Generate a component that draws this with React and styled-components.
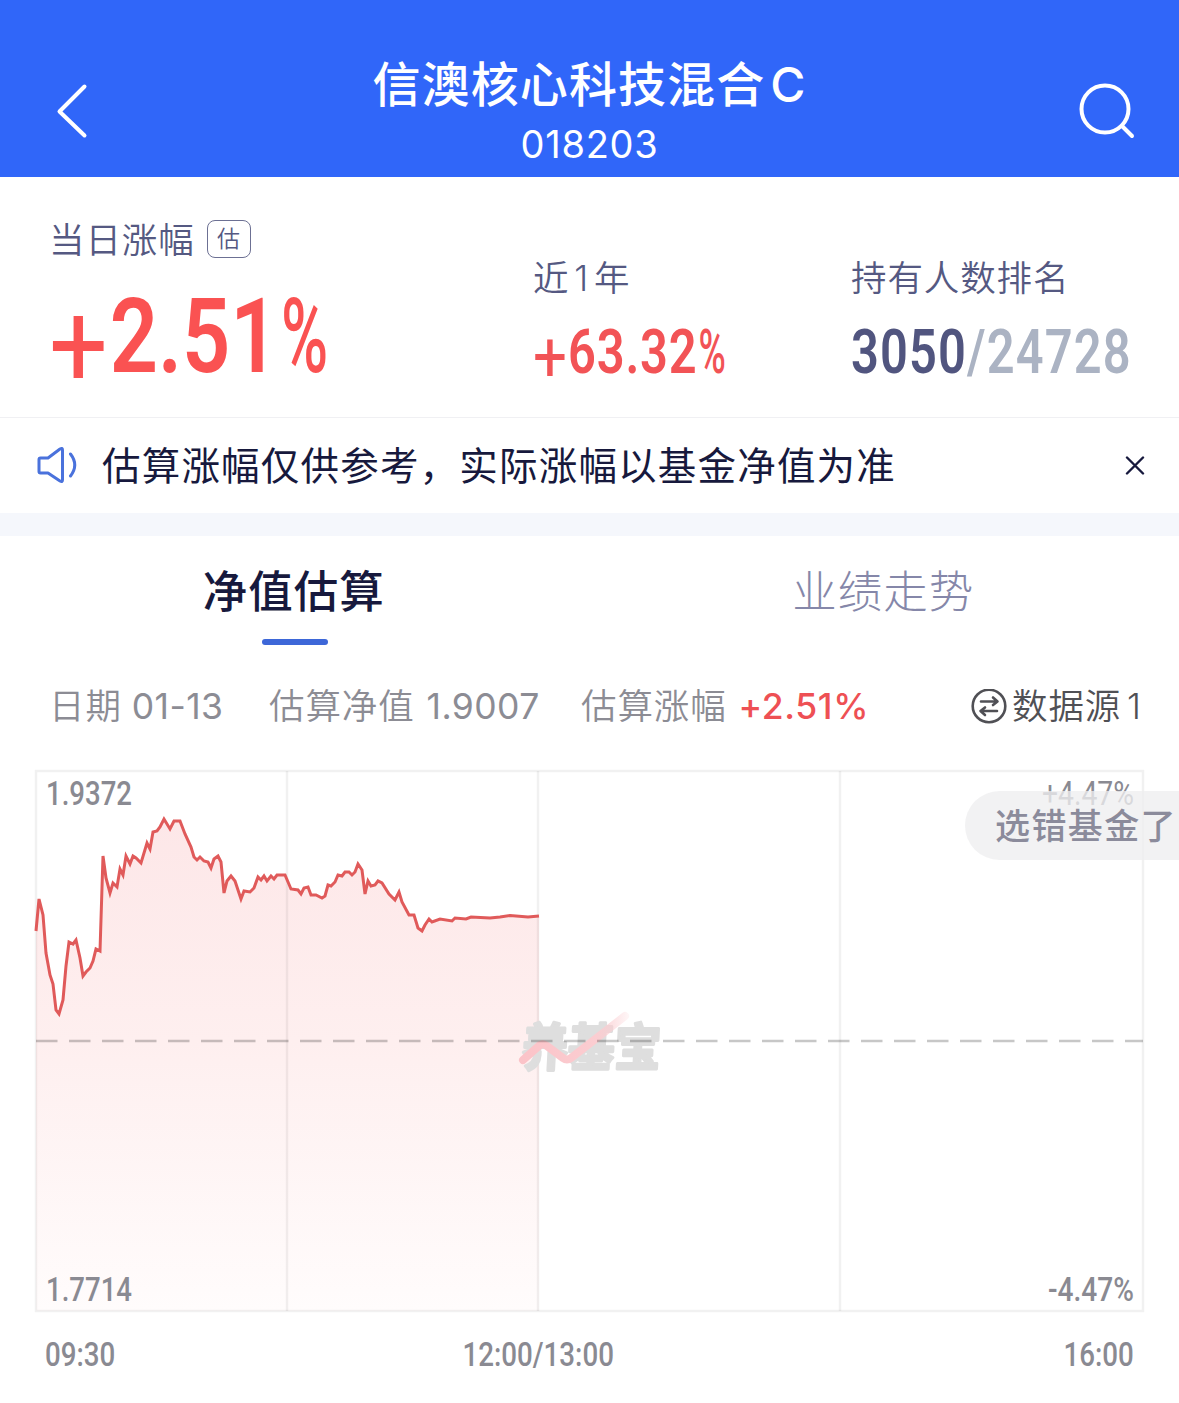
import React from "react";
import styled, { createGlobalStyle } from "styled-components";

const GlobalStyle = createGlobalStyle`
    * {
        box-sizing: border-box;
    }

    body {
        margin: 0;
        background: #fff;
        font-family: Inter, "Noto Sans CJK SC", sans-serif;
        -webkit-font-smoothing: antialiased;
    }
`;

const Page = styled.div`
    width: 1179px;
    height: 1403px;
    overflow: hidden;
    background: #fff;
`;

const Header = styled.header`
    display: flex;
    align-items: flex-start;
    justify-content: space-between;
    height: 177px;
    padding: 0 42px 0 54px;
    color: #fff;
    background: #3066f9;
`;

const HeaderIcon = styled.svg`
    width: 60px;
    height: 60px;
    margin-top: 81px;
    fill: none;
    stroke: #fff;
    stroke-width: 4;
    stroke-linecap: round;
    stroke-linejoin: round;
`;

const Titles = styled.div`
    padding: 54px 12px 0 0;
    text-align: center;
`;

const Title = styled.h1`
    margin: 0;
    font-size: 48px;
    font-weight: 500;
    line-height: 62px;
    letter-spacing: 1.1px;
    word-spacing: -9px;
`;

const Code = styled.div`
    font-size: 38px;
    line-height: 56px;
    letter-spacing: 0.7px;
`;

const Stats = styled.section`
    display: flex;
    height: 241px;
    padding-left: 49px;
    border-bottom: 1px solid #f0f0f3;
`;

const Stat = styled.div`
    flex: none;
    width: ${(props) => props.$width}px;
    padding-top: ${(props) => props.$top}px;
`;

const StatLabel = styled.div`
    height: 48px;
    display: flex;
    align-items: center;
    color: #555982;
    font-size: 35.5px;
    font-weight: 350;
    letter-spacing: 0.9px;
    word-spacing: -6px;
    white-space: nowrap;
`;

const Tag = styled.span`
    display: flex;
    align-items: center;
    justify-content: center;
    width: 44px;
    height: 38px;
    margin: 3px 0 0 12px;
    border: 1.5px solid #6c7093;
    border-radius: 8px;
    font-size: 23px;
    line-height: 30px;
    letter-spacing: 0;
`;

// Narrow figures: Roboto squeezed horizontally
const Num = styled.span`
    display: inline-block;
    color: ${(props) => props.$color};
    font-family: Roboto, sans-serif;
    font-size: ${(props) => props.$size}px;
    font-weight: ${(props) => props.$weight || 600};
    line-height: 1;
    letter-spacing: ${(props) => props.$spacing || 0}px;
    white-space: nowrap;
    transform: scaleX(${(props) => props.$scale || 0.8});
    transform-origin: ${(props) => props.$origin || "left"} center;
`;

const Plus = styled.span`
    display: inline-block;
    width: 0.62em;
    font-size: 1.16em;
    font-weight: 400;
    line-height: 0;
    transform: translateY(0.12em) scaleX(1.06);
    transform-origin: left center;
`;

const Percent = styled.span`
    display: inline-block;
    width: 0.6em;
    margin-left: 0.03em;
    font-weight: 500;
    transform: scaleX(0.76);
    transform-origin: left center;
`;

const StatValue = styled.div`
    margin-top: ${(props) => props.$gap}px;
    line-height: 0;
`;

const Muted = styled.span`
    color: #abb3c3;
`;

const Notice = styled.section`
    display: flex;
    align-items: center;
    height: 95px;
    padding: 0 34px 0 36px;
    color: #17193d;
    font-size: 38.5px;
    letter-spacing: 1.2px;
`;

const NoticeText = styled.span`
    flex: 1;
    margin-left: 24px;
    line-height: 60px;
`;

const Divider = styled.div`
    height: 23px;
    background: #f5f7fc;
`;

const Tabs = styled.nav`
    display: flex;
    height: 110px;
`;

const Tab = styled.div`
    flex: 1;
    display: flex;
    flex-direction: column;
    align-items: center;
    padding-top: 25px;
    color: ${(props) => (props.$active ? "#17193d" : "#8587a9")};
    font-size: 44.5px;
    font-weight: ${(props) => (props.$active ? 500 : 300)};
    line-height: 62px;

    &::after {
        content: "";
        width: 66px;
        height: 6px;
        margin-top: 16px;
        border-radius: 3px;
        background: ${(props) => (props.$active ? "#3d67d8" : "transparent")};
    }
`;

const TabText = styled.span`
    padding-right: 2px;
    letter-spacing: 1px;
`;

const Info = styled.div`
    display: flex;
    align-items: center;
    height: 120px;
    padding: 2px 37px 0 49px;
    color: #8c8c94;
    font-size: 35.5px;
    font-weight: 350;
    line-height: 60px;
    letter-spacing: 0.9px;
    white-space: nowrap;
`;

const InfoItem = styled.span`
    display: flex;
    gap: ${(props) => props.$gap || 12}px;
    width: ${(props) => props.$width}px;
`;

const Figure = styled.span`
    color: ${(props) => (props.$up ? "#ee5054" : "inherit")};
    font-weight: ${(props) => (props.$up ? 500 : 400)};
    letter-spacing: ${(props) => props.$spacing || 0.4}px;
`;

const Source = styled.span`
    display: flex;
    align-items: center;
    gap: 5px;
    margin-left: auto;
    color: #505055;
    word-spacing: -5px;
`;

const ChartBox = styled.div`
    position: relative;
    height: 558px;
`;

const FloatingPill = styled.div`
    position: absolute;
    top: 25px;
    right: 0;
    width: 214px;
    height: 69px;
    padding-left: 30px;
    overflow: hidden;
    border-radius: 35px 0 0 35px;
    background: rgba(238, 238, 240, 0.78);
    color: #8b8b9b;
    font-size: 35px;
    font-weight: 500;
    line-height: 70px;
    letter-spacing: 1.4px;
    white-space: nowrap;
`;

const Axis = styled.div`
    display: grid;
    grid-template-columns: 1fr 1fr 1fr;
    padding: 14px 45px 0;
    line-height: 0;
`;

const AxisCell = styled.div`
    text-align: ${(props) => props.$align};
    ${(props) => props.$align === "center" && "margin-left: -103px;"}
`;

const points = [
    [36, 931], [39, 899], [43, 915], [46, 953], [50, 975], [53, 984], [56, 1010], [59, 1014],
    [63, 1000], [66, 966], [69, 942], [73, 944], [76, 940], [80, 958], [83, 976], [86, 972],
    [90, 968], [93, 961], [96, 949], [100, 951], [103, 856], [106, 878], [110, 893], [113, 883],
    [117, 887], [120, 869], [123, 875], [126, 856], [130, 864], [133, 856], [136, 858], [141, 863],
    [147, 843], [150, 849], [153, 832], [157, 831], [160, 827], [164, 819], [170, 829], [174, 821],
    [180, 821], [185, 834], [191, 847], [194, 857], [197, 860], [200, 857], [204, 861], [208, 862],
    [211, 868], [214, 859], [218, 856], [221, 862], [224, 893], [227, 881], [231, 876], [235, 881],
    [241, 899], [244, 891], [250, 892], [254, 888], [258, 877], [261, 880], [264, 876], [267, 881],
    [271, 876], [274, 879], [277, 875], [285, 875], [291, 889], [298, 890], [301, 894], [304, 888],
    [308, 887], [311, 895], [316, 895], [322, 898], [325, 896], [328, 885], [331, 886], [335, 882],
    [338, 875], [342, 876], [345, 872], [349, 872], [352, 875], [355, 872], [358, 864], [362, 870],
    [365, 894], [368, 881], [371, 886], [375, 885], [378, 881], [382, 883], [389, 894], [395, 900],
    [399, 892], [402, 902], [409, 915], [414, 915], [418, 928], [422, 931], [425, 925], [429, 919],
    [432, 922], [440, 919], [452, 921], [455, 918], [466, 919], [471, 917], [490, 918], [500, 917],
    [510, 915.5], [528, 917], [539, 916],
];

const line = points.map((p) => p.join(",")).join(" ");

function ChartLabel({ x, y, width, weight = 500, children }) {
    return (
        <text
            x={x}
            y={y}
            fill="#8a8a92"
            fontFamily="Roboto, sans-serif"
            fontSize="33"
            fontWeight={weight}
            textLength={width}
            lengthAdjust="spacingAndGlyphs"
        >
            {children}
        </text>
    );
}

function Chart() {
    return (
        <svg width="1179" height="558" viewBox="0 766 1179 558">
            <defs>
                <linearGradient id="area" x1="0" y1="819" x2="0" y2="1311" gradientUnits="userSpaceOnUse">
                    <stop offset="0" stopColor="#fde7e8" />
                    <stop offset="0.45" stopColor="#feefef" />
                    <stop offset="1" stopColor="#fffcfc" />
                </linearGradient>
                <linearGradient id="swoosh" x1="522" y1="0" x2="628" y2="0" gradientUnits="userSpaceOnUse">
                    <stop offset="0" stopColor="#fbc3c8" />
                    <stop offset="0.7" stopColor="#fbcdd1" />
                    <stop offset="1" stopColor="#fbcdd1" stopOpacity="0.2" />
                </linearGradient>
            </defs>
            <polygon points={`36,1311 ${line} 539,1311`} fill="url(#area)" />
            <g fill="none" stroke="#000" strokeOpacity="0.055" strokeWidth="2.5">
                <rect x="36" y="771" width="1107" height="540" />
                <path d="M287 771V1311M538 771V1311M840 771V1311" />
            </g>
            <g transform="translate(521 1066) skewX(-3)">
                <text
                    fill="#dedede"
                    stroke="#dedede"
                    strokeWidth="3"
                    strokeLinejoin="round"
                    fontFamily="'Noto Sans CJK SC', sans-serif"
                    fontSize="51"
                    fontWeight="700"
                    textLength="139"
                    lengthAdjust="spacingAndGlyphs"
                >
                    养基宝
                </text>
            </g>
            <path
                d="M523 1060L540 1045Q543 1043 547 1046L563 1058Q567 1061 571 1058L625 1016"
                fill="none"
                stroke="url(#swoosh)"
                strokeWidth="8"
                strokeLinecap="round"
            />
            <path d="M36 1041H1143" stroke="#000" strokeOpacity="0.22" strokeWidth="2.5" strokeDasharray="21.5 11.5" />
            <polyline points={line} fill="none" stroke="#e05a5a" strokeWidth="3" strokeLinejoin="miter" />
            <ChartLabel x="46" y="805" width="86">1.9372</ChartLabel>
            <ChartLabel x="46" y="1301" width="86">1.7714</ChartLabel>
            <ChartLabel x="1042" y="805" width="92" weight={400}>+4.47%</ChartLabel>
            <ChartLabel x="1048" y="1301" width="86">-4.47%</ChartLabel>
        </svg>
    );
}

function App() {
    return (
        <Page>
            <GlobalStyle />
            <Header>
                <HeaderIcon viewBox="0 0 60 60">
                    <path d="M30.500 5.500L5.500 30.500L30.500 54.500" />
                </HeaderIcon>
                <Titles>
                    <Title>信澳核心科技混合 C</Title>
                    <Code>018203</Code>
                </Titles>
                <HeaderIcon viewBox="0 0 60 60">
                    <circle cx="28" cy="28" r="23.500" />
                    <path d="M45 45L55 55" />
                </HeaderIcon>
            </Header>

            <Stats>
                <Stat $width={484} $top={36}>
                    <StatLabel>
                        当日涨幅
                        <Tag>估</Tag>
                    </StatLabel>
                    <StatValue $gap={24}>
                        <Num $size={103} $scale={0.82} $color="#fa5252">
                            <Plus>+</Plus>2.51<Percent>%</Percent>
                        </Num>
                    </StatValue>
                </Stat>
                <Stat $width={318} $top={74}>
                    <StatLabel>近 1 年</StatLabel>
                    <StatValue $gap={23}>
                        <Num $size={61} $scale={0.8} $spacing={1} $color="#f25356">
                            <Plus>+</Plus>63.32<Percent>%</Percent>
                        </Num>
                    </StatValue>
                </Stat>
                <Stat $width={328} $top={74}>
                    <StatLabel>持有人数排名</StatLabel>
                    <StatValue $gap={23}>
                        <Num $size={61} $scale={0.8} $spacing={1.4} $color="#51557f">
                            3050<Muted>/24728</Muted>
                        </Num>
                    </StatValue>
                </Stat>
            </Stats>

            <Notice>
                <svg width="42" height="42" viewBox="0 0 42 42" fill="none" stroke="#4a72dc" strokeWidth="3" strokeLinejoin="round" strokeLinecap="round">
                    <path d="M3 14.500Q3 13 4.500 13H12L24 4Q26.500 2.500 26.500 5V35Q26.500 37.500 24 36L12 28H4.500Q3 28 3 26.500Z" />
                    <path d="M34.500 9Q43 20 34.500 31" />
                </svg>
                <NoticeText>估算涨幅仅供参考，实际涨幅以基金净值为准</NoticeText>
                <svg width="20" height="20" viewBox="0 0 20 20" stroke="#17193d" strokeWidth="2.400" strokeLinecap="round">
                    <path d="M2 1.500L18 17.500M18 1.500L2 17.500" />
                </svg>
            </Notice>
            <Divider />

            <Tabs>
                <Tab $active>
                    <TabText>净值估算</TabText>
                </Tab>
                <Tab>
                    <TabText>业绩走势</TabText>
                </Tab>
            </Tabs>

            <Info>
                <InfoItem $width={220} $gap={10}>
                    日期 <Figure>01-13</Figure>
                </InfoItem>
                <InfoItem $width={312}>
                    估算净值 <Figure>1.9007</Figure>
                </InfoItem>
                <InfoItem $width={290}>
                    估算涨幅 <Figure $up $spacing={0.6}>+2.51%</Figure>
                </InfoItem>
                <Source>
                    <svg width="36" height="36" viewBox="0 0 36 36" fill="none" stroke="#505055" strokeWidth="2.600" strokeLinecap="round" strokeLinejoin="round">
                        <circle cx="18" cy="17" r="16.300" />
                        <path d="M10 12.500H26M22 8.500L26.500 12.500L22 16M26 22H10M14 18.500L9.500 22L14 26" />
                    </svg>
                    数据源 1
                </Source>
            </Info>

            <ChartBox>
                <Chart />
                <FloatingPill>选错基金了</FloatingPill>
            </ChartBox>

            <Axis>
                <AxisCell $align="left">
                    <Num $size={33} $weight={500} $color="#8a8a92" $scale={0.84}>09:30</Num>
                </AxisCell>
                <AxisCell $align="center">
                    <Num $size={33} $weight={500} $color="#8a8a92" $scale={0.84} $origin="center">12:00/13:00</Num>
                </AxisCell>
                <AxisCell $align="right">
                    <Num $size={33} $weight={500} $color="#8a8a92" $scale={0.84} $origin="right">16:00</Num>
                </AxisCell>
            </Axis>
        </Page>
    );
}

export default App;
